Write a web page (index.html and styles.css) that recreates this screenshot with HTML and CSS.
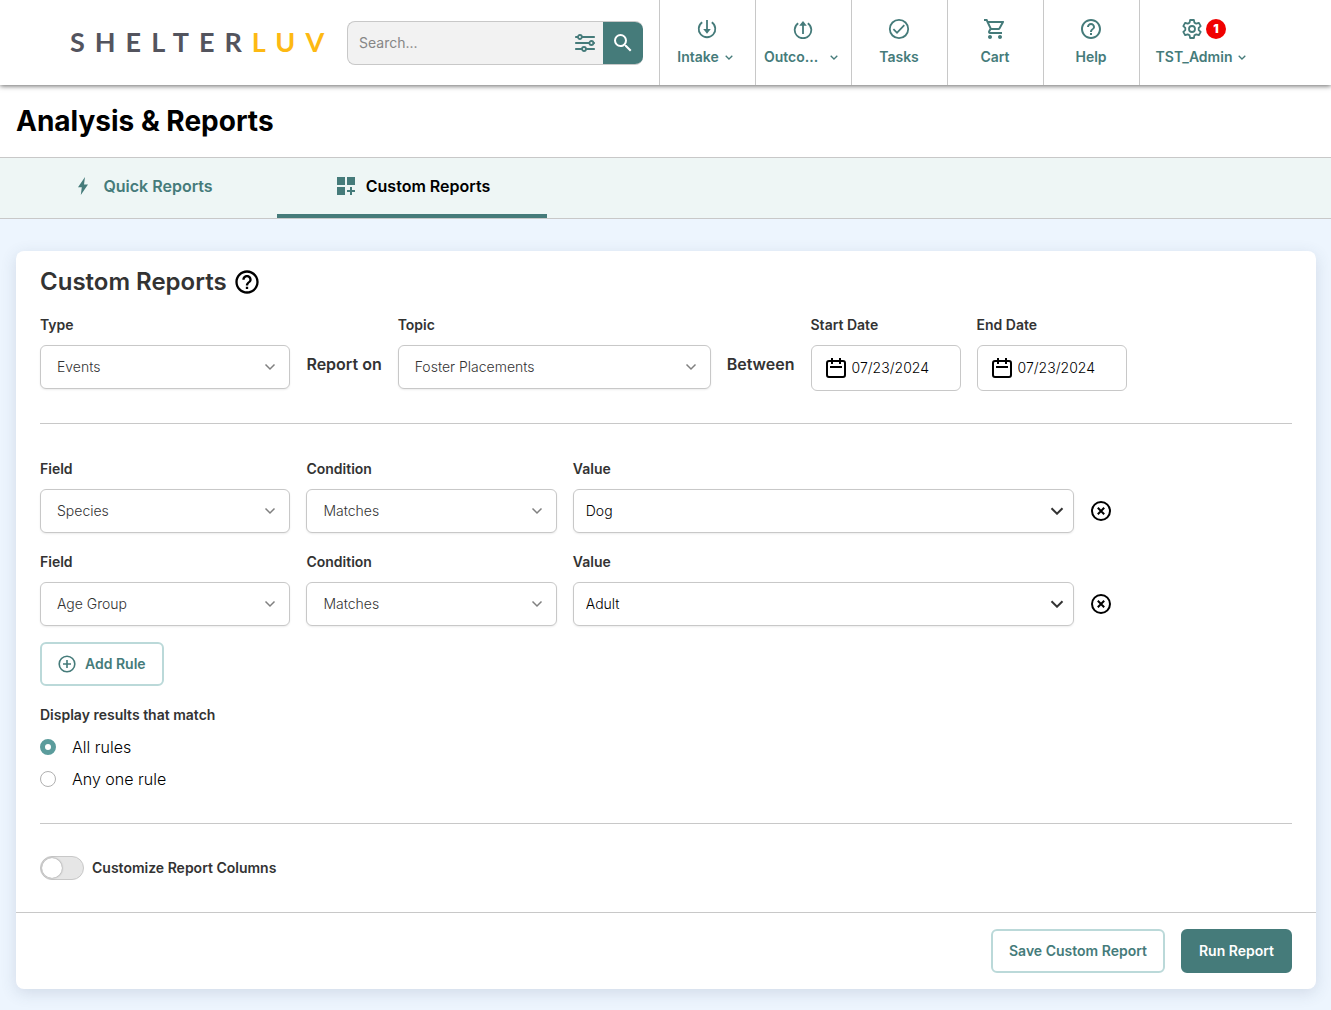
FILE: index.html
```html
<!DOCTYPE html>
<html lang="en">
<head>
<meta charset="utf-8">
<meta name="viewport" content="width=device-width, initial-scale=1">
<title>Analysis &amp; Reports</title>
<link rel="stylesheet" href="styles.css">
</head>

<body>
<header class="topbar">
  <a class="logo" href="#">SHELTER<span>LUV</span></a>

  <form class="search">
    <input type="text" placeholder="Search..." aria-label="Search">
    <button type="button" class="filter" aria-label="Filters">
      <svg width="20" height="20" viewBox="0 0 20 20" fill="none" stroke="currentColor" stroke-width="1.8" stroke-linecap="round"><path d="M.8 4h2M7 4h12.2M.8 10h13.4M18.6 10h.6M.8 16h6M11.2 16h8"/><circle cx="4.9" cy="4" r="2"/><circle cx="16.4" cy="10" r="2"/><circle cx="9" cy="16" r="2"/></svg>
    </button>
    <button type="submit" class="go" aria-label="Search">
      <svg width="24" height="24" viewBox="0 0 24 24" fill="currentColor"><path d="M15.5 14h-.79l-.28-.27A6.47 6.47 0 0 0 16 9.500 6.500 6.500 0 1 0 9.500 16c1.610 0 3.090-.59 4.230-1.570l.27.28v.79l5 4.990L20.490 19l-4.990-5zm-6 0C7.010 14 5 11.990 5 9.500S7.010 5 9.500 5 14 7.010 14 9.500 11.990 14 9.500 14z"/></svg>
    </button>
  </form>

  <nav class="menu">
    <a href="#">
      <span class="ico"><svg width="20" height="20" viewBox="0 0 20 20" fill="none" stroke="currentColor" stroke-width="1.8"><path d="M5.200 3.200a8.300 8.300 0 1 0 9.600 0"/><path d="M10 1v10"/><path d="M6.200 10h7.600L10 14.800z" fill="currentColor" stroke="none"/></svg></span>
      <span class="txt drop">Intake <svg class="chev" width="8" height="5" viewBox="0 0 8 5"><path d="M.7.7 4 4 7.300.7"/></svg></span>
    </a>
    <a href="#">
      <span class="ico"><svg width="20" height="20" viewBox="0 0 20 20" fill="none" stroke="currentColor" stroke-width="1.800"><path d="M5.200 4.200a8.300 8.300 0 1 0 9.600 0"/><path d="M10 5v10"/><path d="M6.200 6.800h7.600L10 2z" fill="currentColor" stroke="none"/></svg></span>
      <span class="txt drop spread">Outco... <svg class="chev" width="8" height="5" viewBox="0 0 8 5"><path d="M.7.7 4 4 7.300.7"/></svg></span>
    </a>
    <a href="#">
      <span class="ico"><svg width="22" height="22" viewBox="0 0 22 22" fill="none" stroke="currentColor" stroke-width="1.800"><circle cx="11" cy="11" r="9.200"/><path d="M5.400 11.200 9 14.800l7.300-7.600"/></svg></span>
      <span class="txt">Tasks</span>
    </a>
    <a href="#">
      <span class="ico"><svg width="24" height="24" viewBox="0 0 24 24" fill="currentColor"><path d="M15.550 13c.75 0 1.410-.41 1.750-1.030l3.580-6.490A.996.996 0 0 0 20.010 4H5.210l-.94-2H1v2h2l3.600 7.590-1.350 2.440C4.520 15.370 5.480 17 7 17h12v-2H7l1.100-2h7.450zM6.160 6h12.150l-2.760 5H8.530L6.160 6zM7 18c-1.100 0-1.990.9-1.990 2S5.900 22 7 22s2-.9 2-2-.9-2-2-2zm10 0c-1.100 0-1.990.9-1.990 2s.89 2 1.990 2 2-.9 2-2-.9-2-2-2z"/></svg></span>
      <span class="txt">Cart</span>
    </a>
    <a href="#">
      <span class="ico"><svg width="24" height="24" viewBox="0 0 24 24" fill="currentColor"><path d="M11 18h2v-2h-2v2zm1-16C6.480 2 2 6.480 2 12s4.480 10 10 10 10-4.480 10-10S17.520 2 12 2zm0 18c-4.410 0-8-3.590-8-8s3.590-8 8-8 8 3.590 8 8-3.590 8-8 8zm0-14c-2.210 0-4 1.790-4 4h2c0-1.100.9-2 2-2s2 .9 2 2c0 2-3 1.750-3 5h2c0-2.250 3-2.500 3-5 0-2.210-1.790-4-4-4z"/></svg></span>
      <span class="txt">Help</span>
    </a>
    <a href="#" class="user">
      <span class="ico"><svg width="20" height="20" viewBox="0 0 20 20" fill="none" stroke="currentColor" stroke-width="1.800" stroke-linejoin="round"><path d="M8.100 1h3.800l.5 2.600 1.900 1.100 2.500-.9 1.900 3.300-2 1.800v2.200l2 1.800-1.900 3.300-2.500-.9-1.900 1.100-.5 2.600H8.100l-.5-2.600-1.900-1.100-2.500.9-1.900-3.300 2-1.800V8.900l-2-1.800 1.900-3.300 2.500.9 1.900-1.100z"/><circle cx="10" cy="10" r="3"/></svg><b class="count">1</b></span>
      <span class="txt">TST_Admin <svg class="chev" width="8" height="5" viewBox="0 0 8 5"><path d="M.7.7 4 4 7.300.7"/></svg></span>
    </a>
  </nav>
</header>

<h1>Analysis &amp; Reports</h1>

<nav class="tabs">
  <a href="#"><svg width="24" height="24" viewBox="0 0 24 24" fill="currentColor"><path d="M14 3 7 13.200h3.800L9.800 21 17 10.600h-4z"/></svg>Quick Reports</a>
  <a href="#" class="on"><svg width="24" height="24" viewBox="0 0 24 24" fill="currentColor"><path d="M3 3h8v8H3zM13 3h8v8h-8zM3 13h8v8H3zM16 13h2v3h3v2h-3v3h-2v-3h-3v-2h3z"/></svg>Custom Reports</a>
</nav>

<main class="card">
  <div class="body">
    <h2>Custom Reports
      <svg width="28" height="28" viewBox="0 0 24 24" fill="currentColor"><path d="M11 18h2v-2h-2v2zm1-16C6.480 2 2 6.480 2 12s4.480 10 10 10 10-4.480 10-10S17.520 2 12 2zm0 18c-4.410 0-8-3.590-8-8s3.590-8 8-8 8 3.590 8 8-3.590 8-8 8zm0-14c-2.210 0-4 1.790-4 4h2c0-1.100.9-2 2-2s2 .9 2 2c0 2-3 1.750-3 5h2c0-2.250 3-2.500 3-5 0-2.210-1.790-4-4-4z"/></svg>
    </h2>

    <div class="row">
      <div class="field w20">
        <label for="type">Type</label>
        <div class="select">
          <select id="type"><option>Events</option></select>
          <svg width="12" height="8" viewBox="0 0 12 8"><path d="m1.500 1.500 4.500 4.500 4.500-4.500"/></svg>
        </div>
      </div>
      <p class="between">Report on</p>
      <div class="field w25">
        <label for="topic">Topic</label>
        <div class="select">
          <select id="topic"><option>Foster Placements</option></select>
          <svg width="12" height="8" viewBox="0 0 12 8"><path d="m1.500 1.500 4.500 4.500 4.500-4.500"/></svg>
        </div>
      </div>
      <p class="between">Between</p>
      <div class="field">
        <label for="start">Start Date</label>
        <div class="date">
          <svg width="20" height="20" viewBox="0 0 20 20" fill="none" stroke="currentColor" stroke-width="2"><rect x="1" y="3" width="18" height="16" rx="2"/><path d="M6 0v6M14 0v6M4 9h12"/></svg>
          <input type="text" id="start" value="07/23/2024">
        </div>
      </div>
      <div class="field">
        <label for="end">End Date</label>
        <div class="date">
          <svg width="20" height="20" viewBox="0 0 20 20" fill="none" stroke="currentColor" stroke-width="2"><rect x="1" y="3" width="18" height="16" rx="2"/><path d="M6 0v6M14 0v6M4 9h12"/></svg>
          <input type="text" id="end" value="07/23/2024">
        </div>
      </div>
    </div>

    <div class="rules">
      <div class="row">
        <div class="field w20">
          <label for="field1">Field</label>
          <div class="select">
            <select id="field1"><option>Species</option></select>
            <svg width="12" height="8" viewBox="0 0 12 8"><path d="m1.500 1.500 4.500 4.500 4.500-4.500"/></svg>
          </div>
        </div>
        <div class="field w20">
          <label for="cond1">Condition</label>
          <div class="select">
            <select id="cond1"><option>Matches</option></select>
            <svg width="12" height="8" viewBox="0 0 12 8"><path d="m1.500 1.500 4.500 4.500 4.500-4.500"/></svg>
          </div>
        </div>
        <div class="field w40">
          <label for="value1">Value</label>
          <div class="select dark">
            <select id="value1"><option>Dog</option></select>
            <svg width="14" height="8" viewBox="0 0 14 8"><path d="m1.500 1.200 5.500 5.500 5.500-5.500"/></svg>
          </div>
        </div>
        <button type="button" class="remove" aria-label="Remove rule">
          <svg width="20" height="20" viewBox="0 0 20 20" fill="none" stroke="currentColor" stroke-width="2"><circle cx="10" cy="10" r="9"/><path d="m6.800 6.800 6.400 6.400M13.200 6.800l-6.400 6.400"/></svg>
        </button>
      </div>

      <div class="row">
        <div class="field w20">
          <label for="field2">Field</label>
          <div class="select">
            <select id="field2"><option>Age Group</option></select>
            <svg width="12" height="8" viewBox="0 0 12 8"><path d="m1.500 1.500 4.500 4.500 4.500-4.500"/></svg>
          </div>
        </div>
        <div class="field w20">
          <label for="cond2">Condition</label>
          <div class="select">
            <select id="cond2"><option>Matches</option></select>
            <svg width="12" height="8" viewBox="0 0 12 8"><path d="m1.500 1.500 4.500 4.500 4.500-4.500"/></svg>
          </div>
        </div>
        <div class="field w40">
          <label for="value2">Value</label>
          <div class="select dark">
            <select id="value2"><option>Adult</option></select>
            <svg width="14" height="8" viewBox="0 0 14 8"><path d="m1.500 1.200 5.500 5.500 5.500-5.500"/></svg>
          </div>
        </div>
        <button type="button" class="remove" aria-label="Remove rule">
          <svg width="20" height="20" viewBox="0 0 20 20" fill="none" stroke="currentColor" stroke-width="2"><circle cx="10" cy="10" r="9"/><path d="m6.800 6.800 6.400 6.400M13.200 6.800l-6.400 6.400"/></svg>
        </button>
      </div>

      <button type="button" class="btn add">
        <svg width="18" height="18" viewBox="0 0 18 18" fill="none" stroke="currentColor" stroke-width="1.600"><circle cx="9" cy="9" r="7.800"/><path d="M9 5v8M5 9h8"/></svg>
        Add Rule
      </button>

      <fieldset>
        <legend>Display results that match</legend>
        <label><input type="radio" name="match" checked>All rules</label>
        <label><input type="radio" name="match">Any one rule</label>
      </fieldset>
    </div>

    <label class="toggle"><input type="checkbox">Customize Report Columns</label>
  </div>

  <div class="foot">
    <button type="button" class="btn">Save Custom Report</button>
    <button type="button" class="btn primary">Run Report</button>
  </div>
</main>
</body>
</html>
```

FILE: styles.css
```css
*{margin:0;padding:0;box-sizing:border-box;}
body{background:#edf5fe;color:#333;font-family:Inter,"Liberation Sans",sans-serif;font-size:14px;line-height:20px;}
a{color:inherit;text-decoration:none;}
button,input,select{font:inherit;color:inherit;}
button{border:0;background:none;cursor:pointer;}
svg{display:block;flex:none;}

/* top bar */
.topbar{position:relative;display:flex;align-items:center;justify-content:center;height:85px;background:#fff;box-shadow:0 1px 5px rgba(0,0,0,.6);}
.logo{font-family:Lato,sans-serif;font-size:27px;line-height:32px;font-weight:700;letter-spacing:10px;color:#53545e;width:279px;padding-left:2px;padding-bottom:2px;}
.logo span{color:#fdb913;}
.search{display:flex;width:296px;height:44px;margin-right:16px;border-radius:8px;overflow:hidden;background:#f2f2f2;border:1px solid #c8c8c8;border-right:0;}
.search input{flex:1;min-width:0;padding-left:11px;border:0;outline:0;background:none;}
.search input::placeholder{color:#868686;opacity:1;}
.filter{padding:0 8px;color:#457b7a;}
.go{width:40px;margin:-1px 0;display:flex;align-items:center;justify-content:center;background:#457b7a;color:#fff;}
.menu{display:flex;align-self:stretch;color:#457b7a;font-weight:600;}
.menu a{display:flex;flex-direction:column;align-items:center;width:96px;padding:16px 1px 0 0;border-left:1px solid #c8c8c8;}
.menu a.user{width:124px;}
.ico{display:flex;align-items:center;gap:4px;height:25px;margin-bottom:6px;}
.user .ico{padding-left:6px;}
.txt{display:flex;align-items:center;gap:6px;}
.drop{padding-right:4px;}
.spread{gap:12px;}
.chev{fill:none;stroke:currentColor;stroke-width:1.3;}
.count{width:20px;height:20px;border-radius:50%;background:#f00000;color:#fff;font-size:12px;text-align:center;}

h1{padding:16px;background:#fff;color:#000;font-size:28px;line-height:40px;font-weight:700;border-bottom:1px solid #c8c8c8;}

.tabs{display:flex;height:61px;padding-left:7px;background:#eef6f5;border-bottom:1px solid #c8c8c8;font-size:16px;font-weight:600;color:#457b7a;}
.tabs a{display:flex;align-items:center;justify-content:center;gap:8px;width:270px;border-bottom:4px solid transparent;}
.tabs a.on{color:#000;border-color:#457b7a;}
.tabs svg{color:#457b7a;}

/* report builder */
.card{margin:32px 15px 20px 16px;background:#fff;border-radius:8px;box-shadow:0 4px 16px rgba(60,80,110,.16);}
.body{padding:16px 24px 32px;}
h2{display:flex;align-items:center;gap:6px;margin-bottom:18px;font-size:24px;line-height:30px;font-weight:600;font-optical-sizing:none;}
h2 svg{color:#000;}
.row{display:flex;gap:16px;}
.field > label,legend{display:block;font-weight:600;}
.field > label{margin-bottom:10px;}
.w20{width:20%;}
.w25{width:25%;}
.w40{width:40%;}
.between{padding-top:39px;font-size:16px;font-weight:600;}
.select{position:relative;}
.select select{display:block;width:100%;height:44px;padding:0 32px 0 16px;border:1px solid #c8c8c8;border-radius:6px;background:#fff;appearance:none;font-weight:300;box-shadow:0 1px 2px rgba(0,0,0,.08);}
.select svg{position:absolute;right:14px;top:18px;fill:none;stroke:#808080;stroke-width:1.5;pointer-events:none;}
.dark select{padding-left:12px;color:#000;}
.dark svg{right:10px;stroke:#333;stroke-width:2;}
.date{display:flex;align-items:center;gap:6px;width:150px;height:46px;padding:0 14px;border:1px solid #c8c8c8;border-radius:6px;color:#000;}
.date input{width:100%;min-width:0;border:0;outline:0;background:none;font-weight:300;}

.rules{margin:32px 0;padding:35px 0 28px;border:solid #c8c8c8;border-width:1px 0;}
.rules .row{margin-bottom:19px;}
.remove{align-self:flex-end;height:44px;padding:0 1px;color:#000;}
.btn{height:44px;padding:0 16px;border:2px solid #bbd9d9;border-radius:6px;background:#fff;color:#457b7a;font-weight:600;}
.primary{background:#457b7a;border-color:#457b7a;color:#fff;}
.add{display:flex;align-items:center;gap:9px;margin-top:-3px;margin-bottom:19px;}
fieldset{border:0;}
legend{margin-bottom:6px;}
fieldset label{display:flex;align-items:center;gap:16px;height:32px;font-size:16px;font-weight:300;color:#000;}
fieldset input{appearance:none;width:16px;height:16px;border:1px solid #b0b0b0;border-radius:50%;background:#fff;}
fieldset input:checked{border:5px solid #5b9c9c;}
.toggle{display:flex;align-items:center;gap:8px;font-weight:600;}
.toggle input{appearance:none;width:44px;height:24px;padding:1px;border:1px solid #c8c8c8;border-radius:12px;background:#e6e6e6;}
.toggle input::before{content:"";display:block;width:20px;height:20px;border-radius:50%;background:#fff;box-shadow:0 0 2px rgba(0,0,0,.5);}
.toggle input:checked{background:#5b9c9c;}
.toggle input:checked::before{margin-left:auto;}

.foot{display:flex;justify-content:flex-end;gap:16px;padding:16px 24px;border-top:1px solid #c8c8c8;}
```
